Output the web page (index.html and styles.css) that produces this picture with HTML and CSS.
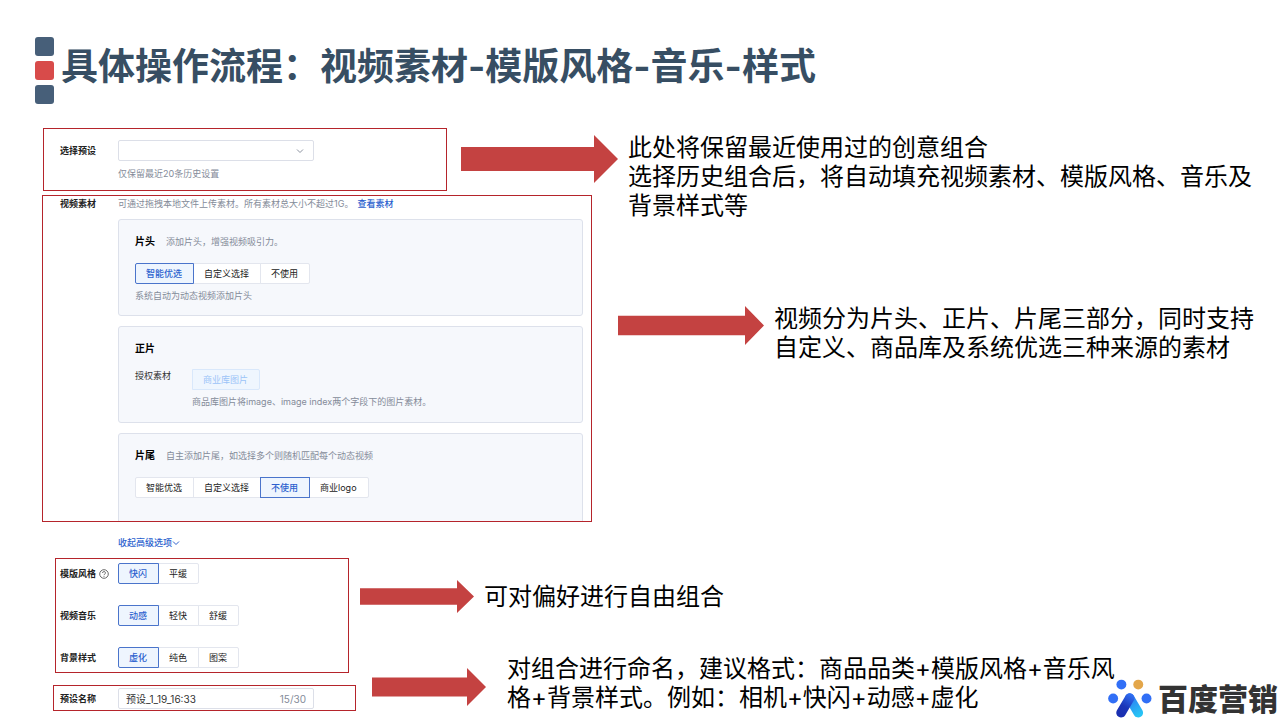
FILE: index.html
```html
<!DOCTYPE html>
<html lang="zh-CN">
<head>
    <meta charset="utf-8">
    <meta name="viewport" content="width=device-width, initial-scale=1">
    <title>具体操作流程</title>
    <link rel="stylesheet" href="styles.css">
</head>
<body>
<main class="slide">
    <header class="head">
        <div class="marks"><i></i><i class="red"></i><i></i></div>
        <h1>具体操作流程：视频素材-模版风格-音乐-样式</h1>
    </header>

    <section class="row row-preset">
        <div class="panel">
            <div class="field">
                <label class="label" for="preset">选择预设</label>
                <div class="control">
                    <div class="select-wrap">
                        <select id="preset" class="box"><option></option></select>
                        <svg class="chevron" viewBox="0 0 8 8"><path d="M1 2.5l3 3 3-3"/></svg>
                    </div>
                    <p class="hint">仅保留最近20条历史设置</p>
                </div>
            </div>
        </div>
        <div class="arrow"></div>
        <p class="note">此处将保留最近使用过的创意组合<br>选择历史组合后，将自动填充视频素材、模版风格、音乐及背景样式等</p>
    </section>

    <section class="row row-video">
        <div class="panel">
            <div class="field">
                <span class="label">视频素材</span>
                <div class="control">
                    <p class="tip">可通过拖拽本地文件上传素材。所有素材总大小不超过1G。<a href="#">查看素材</a></p>
                    <div class="card">
                        <h2>片头<small>添加片头，增强视频吸引力。</small></h2>
                        <div class="group">
                            <button type="button" class="on">智能优选</button>
                            <button type="button">自定义选择</button>
                            <button type="button">不使用</button>
                        </div>
                        <p class="hint">系统自动为动态视频添加片头</p>
                    </div>
                    <div class="card">
                        <h2>正片</h2>
                        <div class="auth">
                            <span class="auth-label">授权素材</span>
                            <div>
                                <div class="group"><button type="button" class="off" disabled>商业库图片</button></div>
                                <p class="hint">商品库图片将image、image index两个字段下的图片素材。</p>
                            </div>
                        </div>
                    </div>
                    <div class="card last">
                        <h2>片尾<small>自主添加片尾，如选择多个则随机匹配每个动态视频</small></h2>
                        <div class="group">
                            <button type="button">智能优选</button>
                            <button type="button">自定义选择</button>
                            <button type="button" class="on">不使用</button>
                            <button type="button">商业logo</button>
                        </div>
                    </div>
                </div>
            </div>
        </div>
        <div class="arrow"></div>
        <p class="note">视频分为片头、正片、片尾三部分，同时支持自定义、商品库及系统优选三种来源的素材</p>
    </section>

    <a class="collapse" href="#">收起高级选项<svg viewBox="0 0 8 8"><path d="M1 2.5l3 3 3-3"/></svg></a>

    <section class="row row-style">
        <div class="panel">
            <div class="field">
                <span class="label">模版风格<svg class="help" viewBox="0 0 10 10"><circle cx="5" cy="5" r="4.3"/><path d="M3.6 4a1.4 1.4 0 1 1 2 1.2Q5 5.5 5 6.2M5 7v.8"/></svg></span>
                <div class="group">
                    <button type="button" class="on">快闪</button>
                    <button type="button">平缓</button>
                </div>
            </div>
            <div class="field">
                <span class="label">视频音乐</span>
                <div class="group">
                    <button type="button" class="on">动感</button>
                    <button type="button">轻快</button>
                    <button type="button">舒缓</button>
                </div>
            </div>
            <div class="field">
                <span class="label">背景样式</span>
                <div class="group">
                    <button type="button" class="on">虚化</button>
                    <button type="button">纯色</button>
                    <button type="button">图案</button>
                </div>
            </div>
        </div>
        <div class="arrow"></div>
        <p class="note">可对偏好进行自由组合</p>
    </section>

    <section class="row row-name">
        <div class="panel">
            <div class="field">
                <label class="label" for="name">预设名称</label>
                <div class="box name-box">
                    <input id="name" type="text" value="预设_1_19_16:33">
                    <span>15/30</span>
                </div>
            </div>
        </div>
        <div class="arrow"></div>
        <p class="note">对组合进行命名，建议格式：商品品类+模版风格+音乐风格+背景样式。例如：相机+快闪+动感+虚化</p>
    </section>

    <div class="brand">
        <svg viewBox="80 58 132 118">
            <defs>
                <linearGradient id="legL" gradientUnits="userSpaceOnUse" x1="150" y1="105" x2="115" y2="165">
                    <stop offset="0" stop-color="#2f6ff2"/><stop offset=".6" stop-color="#1b35b8"/><stop offset="1" stop-color="#1a2fb0"/>
                </linearGradient>
                <linearGradient id="legR" gradientUnits="userSpaceOnUse" x1="140" y1="105" x2="175" y2="165">
                    <stop offset="0" stop-color="#2f6ff2"/><stop offset="1" stop-color="#27c3f5"/>
                </linearGradient>
            </defs>
            <g fill="#316ff6">
                <circle cx="120" cy="75" r="15"/>
                <circle cx="171" cy="75" r="15" fill="#e3a64a"/>
                <circle cx="95" cy="117" r="15"/>
                <circle cx="196" cy="117" r="15"/>
            </g>
            <path d="M145 116L171 160" stroke="url(#legR)"/>
            <path d="M145 116L119 160" stroke="url(#legL)"/>
        </svg>
        <span>百度营销</span>
    </div>
</main>
</body>
</html>
```
FILE: styles.css
```css
*{box-sizing:border-box;}
body{margin:0;background:#fff;color:#000;font-family:Inter,"Noto Sans CJK SC",sans-serif;font-size:9px;line-height:14px;}
h1,h2,p{margin:0;}
a{color:#2b5fce;text-decoration:none;font-weight:500;}
.slide{position:relative;min-height:100vh;padding:37px 16px 0 0;}

/* title */
.head{display:flex;gap:7px;margin:0 0 24px 35px;}
.marks{display:flex;flex-direction:column;gap:5px;}
.marks i{width:19px;height:19px;border-radius:3px;background:#475f79;}
.marks .red{background:#d84b4a;}
h1{font-size:37px;line-height:60px;font-weight:bold;color:#374e63;}

/* outlined panel, arrow, note */
.row{display:flex;align-items:flex-start;}
.panel{flex:none;border:1px solid #b5242b;overflow:hidden;}
.arrow{flex:none;background:#c44241;clip-path:polygon(0 25%,calc(100% - var(--tip)) 25%,calc(100% - var(--tip)) 0,100% 50%,calc(100% - var(--tip)) 100%,calc(100% - var(--tip)) 75%,0 75%);}
.note{flex:1;margin-left:10px;font-size:24px;line-height:29px;}

.row-preset{margin-left:43px;}
.row-preset .panel{width:404px;padding:11px 0 9px 16px;}
.row-preset .arrow{--tip:24px;width:157px;height:48px;margin:7px 0 0 14px;}
.row-preset .note{margin-top:5px;margin-bottom:-30px;}

.row-video{margin:4px 0 0 42px;}
.row-video .panel{width:550px;height:327px;padding:1px 8px 0 17px;}
.row-video .arrow{--tip:19px;width:146px;height:39px;margin:111px 0 0 26px;}
.row-video .note{margin-top:109px;}

.row-style{margin:8px 0 0 55px;}
.row-style .panel{display:grid;gap:21px;width:294px;padding:4px;}
.row-style .arrow{--tip:17px;width:114px;height:33px;margin:22px 0 0 11px;}
.row-style .note{margin-top:24px;}

.row-name{margin:12px 0 0 53px;}
.row-name .panel{width:303px;padding:2px 0 1px 6px;}
.row-name .arrow{--tip:19px;width:114px;height:38px;margin:-17px 0 0 16px;}
.row-name .note{max-width:624px;margin:-31px 0 0 21px;}

/* form */
.field{display:flex;}
.label{flex:none;width:58px;line-height:21px;font-weight:bold;color:#222;}
.row-video .field > .label{line-height:14px;}
.control{flex:1;min-width:0;}
.box{width:196px;height:21px;border:1px solid #dcdfe8;border-radius:2px;background:#fff;}
.select-wrap{position:relative;width:196px;height:21px;}
select{display:block;appearance:none;font:inherit;}
.chevron{position:absolute;right:10px;top:7px;}
.chevron,.collapse svg{width:8px;height:8px;fill:none;stroke:#8d93a1;stroke-width:1;}
.hint{margin-top:6px;color:#848b99;}
.tip{color:#848b99;}
.tip a{margin-left:4px;}
.help{width:10px;height:10px;margin-left:3px;vertical-align:-2px;fill:none;stroke:#444;stroke-width:.8;}
.name-box{display:flex;align-items:center;padding:0 7px;}
.name-box input{flex:1;min-width:0;padding:0;border:0;outline:0;background:none;font:inherit;font-size:10px;color:#333;}
.name-box span{font-size:10px;color:#848b99;}

.card{height:97px;margin-bottom:10px;padding:14px 16px 0 16px;border:1px solid #dde1eb;border-radius:3px;background:#f6f8fc;}
.card .hint{margin-top:5px;}
.tip + .card{margin-top:8px;}
.card.last{margin-bottom:0;}
h2{font-size:10px;line-height:14px;font-weight:bold;}
h2 small{margin-left:11px;font-size:9px;font-weight:normal;color:#848b99;}
.card .group,.auth{margin-top:14px;}
.auth{display:flex;}
.auth .group{margin-top:0;}
.auth-label{width:57px;color:#333;}

.group{display:flex;}
.group button{height:21px;margin:0 -1px 0 0;padding:0 11px 0 10px;border:1px solid #e3e6ee;background:#fff;font:inherit;color:#222;}
.group button:first-child{border-radius:2px 0 0 2px;}
.group button:last-child{border-radius:0 2px 2px 0;}
.group .on{position:relative;border-color:#4a74cb;background:#eef5fe;color:#2b5fce;font-weight:500;}
.group .off{border-color:#d9e8fb;background:#eff6fe;color:#9cc4f8;}

.collapse{display:flex;align-items:center;width:max-content;margin:14px 0 0 118px;}
.collapse svg{stroke:#2b5fce;}

/* logo */
.brand{position:absolute;right:2px;bottom:2px;display:flex;align-items:center;gap:6px;}
.brand svg{width:44px;height:39px;fill:none;stroke-width:29;stroke-linecap:round;}
.brand g{stroke:none;}
.brand span{font-size:30px;line-height:36px;font-weight:900;color:#333;}
```
